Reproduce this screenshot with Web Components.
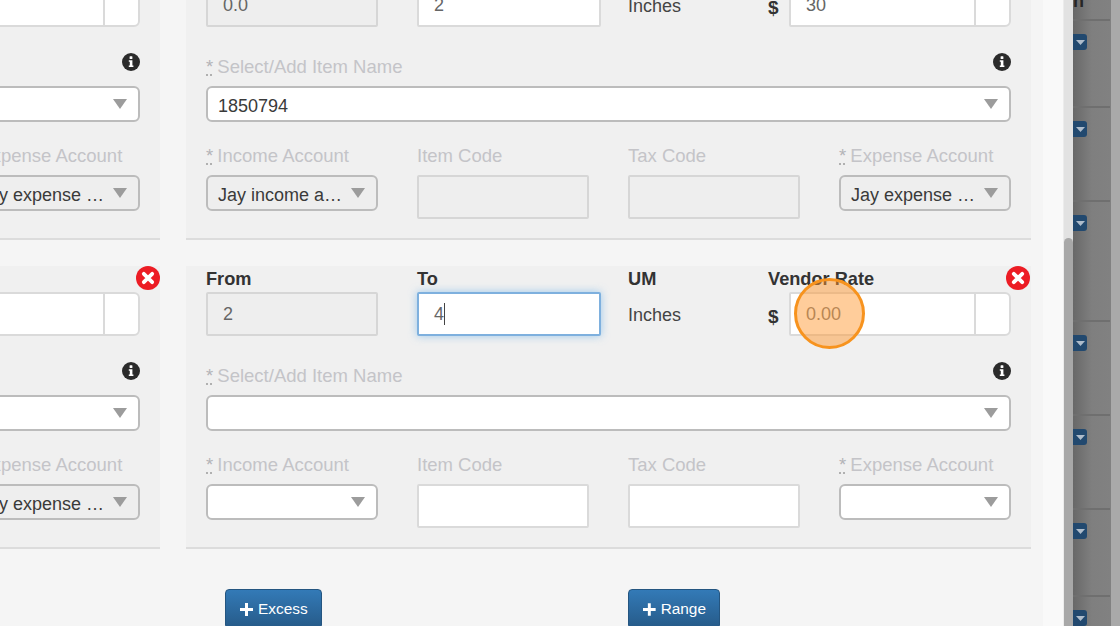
<!DOCTYPE html>
<html>
<head>
<meta charset="utf-8">
<title>Vendor rate ranges</title>
<style>
  html, body { margin: 0; height: 626px; overflow: hidden; background: #f5f5f5; }
  body { font-family: "Liberation Sans", Arial, sans-serif; font-size: 18px; color: #333; }
</style>
</head>
<body>
<rate-page></rate-page>

<script>
const FONT = `"Liberation Sans", Arial, sans-serif`;

class FormLabel extends HTMLElement {
  constructor() {
    super();
    this.attachShadow({ mode: 'open' });
    const strong = this.hasAttribute('strong');
    const required = this.hasAttribute('required');
    this.shadowRoot.innerHTML = `
      <style>
        :host { display: block; height: 26px; line-height: ${strong ? 26 : 28}px; font-size: ${strong ? '18.2px' : '18.5px'}; white-space: nowrap; color: ${strong ? '#333' : '#c4c4c8'}; font-weight: ${strong ? 700 : 400}; }
        abbr { position: relative; display: inline-block; margin-right: -1px; text-decoration: none; color: #b4b4b8; }
        abbr::after { content: ""; position: absolute; left: 0; width: 6px; top: 21px; border-bottom: 2px dotted #b0b0b0; }
      </style>
      ${required ? '<abbr>*</abbr> ' : ''}<slot></slot>
    `;
  }
}

class TextBox extends HTMLElement {
  constructor() {
    super();
    this.attachShadow({ mode: 'open' });
    const value = this.getAttribute('value') || '';
    const addon = this.hasAttribute('addon');
    this.shadowRoot.innerHTML = `
      <style>
        :host { display: flex; box-sizing: border-box; height: 44px; background: #fff; border: 2px solid #dadada; border-radius: 2px; font-size: 18px; color: #666; line-height: 40px; }
        :host([disabled]) { background: #eee; border-color: #d6d6d6; }
        :host([addon]) { border-radius: 2px 6px 6px 2px; }
        :host([focused]) { border-color: #7eb0de; box-shadow: 0 0 8px rgba(102, 175, 233, .6); }
        :host([placeholder]) { color: #777; }
        .text { flex: 1; padding-left: 15px; min-width: 0; }
        .caret { display: inline-block; width: 1px; height: 22px; background: #444; vertical-align: -5px; }
        .addon { width: 33px; border-left: 2px solid #dadada; }
      </style>
      <div class="text">${value}${this.hasAttribute('focused') ? '<span class="caret"></span>' : ''}</div>
      ${addon ? '<div class="addon"></div>' : ''}
    `;
  }
}

class DropSelect extends HTMLElement {
  constructor() {
    super();
    this.attachShadow({ mode: 'open' });
    this.shadowRoot.innerHTML = `
      <style>
        :host { display: block; position: relative; box-sizing: border-box; height: 36px; background: #fff; border: 2px solid #bcbcbc; border-radius: 6px; font-size: 18px; color: #3a3a3a; }
        :host([disabled]) { background: #eee; }
        .text { padding: 0 30px 0 10px; line-height: 36px; white-space: nowrap; overflow: hidden; text-overflow: ellipsis; }
        svg { position: absolute; right: 11px; top: 11px; }
      </style>
      <div class="text">${this.getAttribute('value') || ''}</div>
      <svg width="14" height="10" viewBox="0 0 14 10"><path d="M0 0h14L7 10z" fill="#9c9c9c"/></svg>
    `;
  }
}

class InfoIcon extends HTMLElement {
  constructor() {
    super();
    this.attachShadow({ mode: 'open' });
    this.shadowRoot.innerHTML = `
      <style>:host { display: block; width: 18px; height: 18px; } svg { display: block; }</style>
      <svg width="18" height="18" viewBox="0 0 18 18">
        <circle cx="9" cy="9" r="9" fill="#2b2b2b"/>
        <rect x="7.6" y="3.3" width="2.8" height="2.6" rx=".5" fill="#fff"/>
        <path d="M6.8 7.2h3.600v5.200h1v1.600H6.800v-1.600h1v-3.600h-1z" fill="#fff"/>
      </svg>
    `;
  }
}

class RemoveIcon extends HTMLElement {
  constructor() {
    super();
    this.attachShadow({ mode: 'open' });
    this.shadowRoot.innerHTML = `
      <style>:host { display: block; width: 24px; height: 24px; } svg { display: block; }</style>
      <svg width="24" height="24" viewBox="0 0 24 24">
        <circle cx="12" cy="12" r="12" fill="#ec1c24"/>
        <path d="M7.8 7.8l8.4 8.4M16.2 7.8l-8.4 8.4" stroke="#fff" stroke-width="3.8" stroke-linecap="round" fill="none"/>
      </svg>
    `;
  }
}

class RangeCard extends HTMLElement {
  constructor() {
    super();
    this.attachShadow({ mode: 'open' });
    const attr = name => this.getAttribute(name) || '';
    const partial = this.hasAttribute('partial');
    const continued = this.hasAttribute('continued');
    const locked = this.hasAttribute('locked') ? 'disabled' : '';

    const rateField = `
      <div class="rate">
        ${continued || partial ? '' : '<form-label strong>Vendor Rate</form-label>'}
        <div class="rate-row">
          ${partial ? '' : '<span class="dollar">$</span>'}
          <text-box addon class="rate-box" ${partial ? 'style="margin-left:-40px"' : ''} value="${attr('rate')}" ${attr('rate') === '0.00' ? 'placeholder' : ''}></text-box>
        </div>
        ${this.hasAttribute('marked') ? '<div class="marker"></div>' : ''}
      </div>`;

    const topRow = partial ? `<div class="top top-partial">${rateField}</div>` : `
      <div class="top">
        <div class="col-from">
          ${continued ? '' : '<form-label strong>From</form-label>'}
          <text-box disabled value="${attr('from')}"></text-box>
        </div>
        <div class="col-to">
          ${continued ? '' : '<form-label strong>To</form-label>'}
          <text-box value="${attr('to')}" ${this.hasAttribute('editing') ? 'focused' : ''}></text-box>
        </div>
        <div>
          ${continued ? '' : '<form-label strong>UM</form-label>'}
          <div class="um">Inches</div>
        </div>
        ${rateField}
      </div>`;

    const expenseField = `
      <div>
        <form-label required>Expense Account</form-label>
        <drop-select ${locked} value="${attr('expense')}"></drop-select>
      </div>`;

    const accounts = partial ? `<div class="accounts accounts-partial">${expenseField}</div>` : `
      <div class="accounts">
        <div>
          <form-label required>Income Account</form-label>
          <drop-select ${locked} value="${attr('income')}"></drop-select>
        </div>
        <div>
          <form-label>Item Code</form-label>
          <text-box ${locked}></text-box>
        </div>
        <div>
          <form-label>Tax Code</form-label>
          <text-box ${locked}></text-box>
        </div>
        ${expenseField}
      </div>`;

    this.shadowRoot.innerHTML = `
      <style>
        :host { display: block; position: relative; overflow: hidden; box-sizing: border-box; background: #f0f0f0; border-bottom: 2px solid #dcdcdc; padding: 0 20px 19px; margin-bottom: 26px; }
        :host([partial]) { padding-left: 0; }
        .top { display: grid; grid-template-columns: 211px 211px 140px 243px; }
        .top-partial { grid-template-columns: 1fr; align-items: end; }
        :host([partial]:not([continued])) .top-partial { padding-top: 26px; }
        .col-from { padding-right: 39px; }
        .col-to { padding-right: 27px; }
        .um { height: 44px; line-height: 46px; font-size: 18px; color: #444; }
        .rate { position: relative; }
        .rate-row { display: flex; height: 44px; }
        .dollar { width: 21px; height: 44px; font-weight: 700; font-size: 19px; line-height: 50px; color: #333; }
        .rate-box { flex: 1; }
        .marker { position: absolute; left: 26px; top: 12px; width: 71px; height: 71px; box-sizing: border-box; border: 3px solid #f7931e; border-radius: 50%; background: rgba(255, 150, 45, .48); }
        .name-head { display: flex; justify-content: space-between; align-items: flex-start; margin-top: 26px; height: 33px; }
        :host([partial]) .name-head { justify-content: flex-end; }
        .name-select { display: block; }
        :host([partial]) .name-select { margin-left: -20px; }
        .accounts { display: grid; grid-template-columns: repeat(4, 172px); column-gap: 39px; margin-top: 20px; }
        .accounts-partial { grid-template-columns: 172px; justify-content: end; }
        form-label + drop-select, form-label + text-box { margin-top: 7px; }
        .top form-label + text-box { margin-top: 0; }
        .accounts > div { height: 77px; }
        remove-icon { position: absolute; right: 1px; top: 0; }
        :host([partial]) remove-icon { right: 0; }
      </style>
      ${topRow}
      ${continued ? '' : '<remove-icon></remove-icon>'}
      <div class="name-head">
        ${partial ? '' : '<form-label required>Select/Add Item Name</form-label>'}
        <info-icon></info-icon>
      </div>
      <drop-select class="name-select" value="${attr('item')}" ></drop-select>
      ${accounts}
    `;
  }
}

class AddButton extends HTMLElement {
  constructor() {
    super();
    this.attachShadow({ mode: 'open' });
    this.shadowRoot.innerHTML = `
      <style>
        :host { display: inline-flex; align-items: center; gap: 5px; box-sizing: border-box; height: 40px; padding: 0 13px 0 14px; border: 1px solid #245580; border-radius: 4px; background: linear-gradient(to bottom, #337ab7, #265a88); color: #fff; font-size: 15.4px; }
        svg { display: block; }
      </style>
      <svg width="13" height="13" viewBox="0 0 13 13"><path d="M5 0h3v5h5v3H8v5H5V8H0V5h5z" fill="#fff"/></svg>
      <slot></slot>
    `;
  }
}

class BackdropStrip extends HTMLElement {
  constructor() {
    super();
    this.attachShadow({ mode: 'open' });
    const rows = [87, 94, 120, 94, 94, 87, 87];
    this.shadowRoot.innerHTML = `
      <style>
        :host { display: block; width: 47px; height: 626px; overflow: hidden; background: linear-gradient(to right, #686868, #7f7f7f 40%, #818181 80%, #a9a9a9 81%, #a9a9a9); }
        .head { height: 19px; overflow: hidden; width: 37px; border-bottom: 2px solid #6f6f6f; font: 700 18px/18px ${FONT}; color: #262626; }
        .head span { display: block; margin-top: -8px; }
        .row { box-sizing: border-box; width: 37px; padding-top: 13px; border-bottom: 2px solid #6f6f6f; }
        .caret { display: flex; align-items: center; justify-content: center; width: 14px; height: 16px; background: #22496f; border-radius: 0 3px 3px 0; }
        .caret svg { display: block; }
      </style>
      <div class="head"><span>n</span></div>
      ${rows.map(h => `
        <div class="row" style="height:${h}px">
          <div class="caret"><svg width="9" height="5" viewBox="0 0 9 5"><path d="M0 0h9L4.500 5z" fill="#aebccb"/></svg></div>
        </div>
      `).join('')}
    `;
  }
}

class RatePage extends HTMLElement {
  constructor() {
    super();
    this.attachShadow({ mode: 'open' });
    this.shadowRoot.innerHTML = `
      <style>
        :host { display: flex; width: 1120px; height: 626px; overflow: hidden; background: #f5f5f5; font-family: ${FONT}; }
        .modal { display: flex; width: 1043px; gap: 26px; margin-top: -17px; align-items: flex-start; }
        .left { width: 160px; }
        .right { width: 845px; }
        .actions { display: flex; padding-left: 39px; margin-top: 40px; }
        .actions add-button:first-child { width: 97px; margin-right: 306px; }
        .actions add-button:last-child { width: 92px; }
        .gutter { width: 20px; background: #f9f9f9; }
        .scrollbar { width: 10px; background: #e2e2e2; border-left: 1px solid #ececec; box-sizing: border-box; }
        .thumb { margin-top: 238px; height: 388px; background: #a8a8a8; border-radius: 5px 5px 0 0; }
      </style>
      <div class="modal">
        <div class="left">
          <range-card partial continued locked expense="Jay expense account"></range-card>
          <range-card partial locked expense="Jay expense account"></range-card>
        </div>
        <div class="right">
          <range-card continued locked from="0.0" to="2" rate="30" item="1850794" income="Jay income account" expense="Jay expense account"></range-card>
          <range-card editing marked from="2" to="4" rate="0.00"></range-card>
          <div class="actions">
            <add-button>Excess</add-button>
            <add-button>Range</add-button>
          </div>
        </div>
      </div>
      <div class="gutter"></div>
      <div class="scrollbar"><div class="thumb"></div></div>
      <backdrop-strip></backdrop-strip>
    `;
  }
}

customElements.define('form-label', FormLabel);
customElements.define('text-box', TextBox);
customElements.define('drop-select', DropSelect);
customElements.define('info-icon', InfoIcon);
customElements.define('remove-icon', RemoveIcon);
customElements.define('range-card', RangeCard);
customElements.define('add-button', AddButton);
customElements.define('backdrop-strip', BackdropStrip);
customElements.define('rate-page', RatePage);
</script>
</body>
</html>
